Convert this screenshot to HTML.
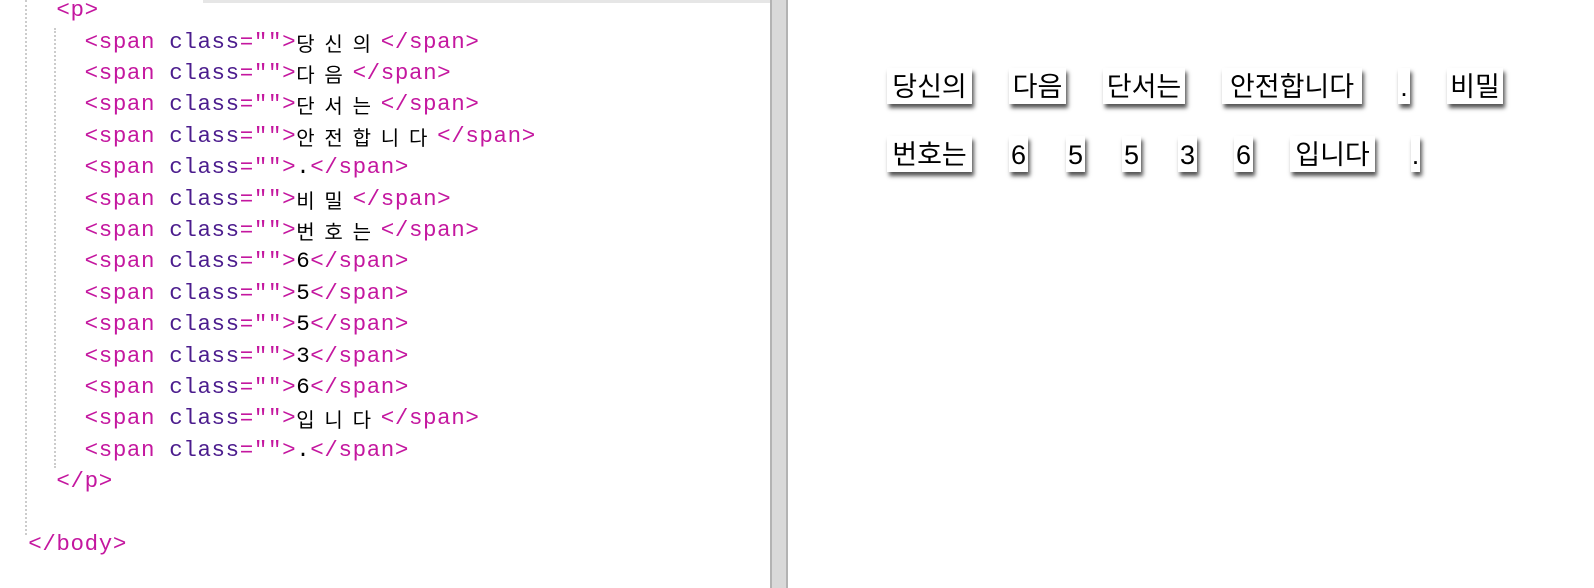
<!DOCTYPE html>
<html><head><meta charset="utf-8"><style>
html,body{margin:0;padding:0;width:1594px;height:588px;overflow:hidden;background:#fff;position:relative}
.code{position:absolute;left:0;top:0;width:770px;height:588px;font-family:"Liberation Mono","Noto Sans CJK KR",monospace;font-size:22.5px;letter-spacing:0.6px;}
.ln{position:absolute;left:0;height:31px;line-height:31px;white-space:pre;color:#000;overflow:hidden}
.t{color:#c4179f}.a{color:#4b1c8d}
.k{display:inline-block;vertical-align:top;height:31px;line-height:31px;width:28.2px;letter-spacing:0;font-family:"Noto Sans CJK KR",sans-serif;font-size:20px}
.g1{position:absolute;left:25px;top:0;height:535px;border-left:2px dotted #ccc}
.g2{position:absolute;left:54px;top:28px;height:440px;border-left:2px dotted #ccc}
.topbar{position:absolute;left:203px;top:0;width:567px;height:3px;background:#e6e6e6}
.div{position:absolute;left:770px;top:0;width:14px;height:588px;background:#d9d9d9;border-left:2px solid #b3b3b3;border-right:2px solid #b3b3b3}
.b{position:absolute;height:36px;line-height:38px;background:#fff;box-shadow:2px 4px 4px #555;font-family:"Liberation Sans","Noto Sans CJK KR",sans-serif;font-size:27px;color:#000;text-align:center;white-space:nowrap}
</style></head><body>
<div class="code">
<div class="topbar"></div>
<div class="g1"></div><div class="g2"></div>
<div class="ln" style="top:-5px">    <span class="t">&lt;p&gt;</span></div>
<div class="ln" style="top:27px">      <span class="t">&lt;span</span> <span class="a">class</span><span class="t">=""&gt;</span><span class="k">당</span><span class="k">신</span><span class="k">의</span><span class="t">&lt;/span&gt;</span></div>
<div class="ln" style="top:58px">      <span class="t">&lt;span</span> <span class="a">class</span><span class="t">=""&gt;</span><span class="k">다</span><span class="k">음</span><span class="t">&lt;/span&gt;</span></div>
<div class="ln" style="top:89px">      <span class="t">&lt;span</span> <span class="a">class</span><span class="t">=""&gt;</span><span class="k">단</span><span class="k">서</span><span class="k">는</span><span class="t">&lt;/span&gt;</span></div>
<div class="ln" style="top:121px">      <span class="t">&lt;span</span> <span class="a">class</span><span class="t">=""&gt;</span><span class="k">안</span><span class="k">전</span><span class="k">합</span><span class="k">니</span><span class="k">다</span><span class="t">&lt;/span&gt;</span></div>
<div class="ln" style="top:152px">      <span class="t">&lt;span</span> <span class="a">class</span><span class="t">=""&gt;</span>.<span class="t">&lt;/span&gt;</span></div>
<div class="ln" style="top:184px">      <span class="t">&lt;span</span> <span class="a">class</span><span class="t">=""&gt;</span><span class="k">비</span><span class="k">밀</span><span class="t">&lt;/span&gt;</span></div>
<div class="ln" style="top:215px">      <span class="t">&lt;span</span> <span class="a">class</span><span class="t">=""&gt;</span><span class="k">번</span><span class="k">호</span><span class="k">는</span><span class="t">&lt;/span&gt;</span></div>
<div class="ln" style="top:246px">      <span class="t">&lt;span</span> <span class="a">class</span><span class="t">=""&gt;</span>6<span class="t">&lt;/span&gt;</span></div>
<div class="ln" style="top:278px">      <span class="t">&lt;span</span> <span class="a">class</span><span class="t">=""&gt;</span>5<span class="t">&lt;/span&gt;</span></div>
<div class="ln" style="top:309px">      <span class="t">&lt;span</span> <span class="a">class</span><span class="t">=""&gt;</span>5<span class="t">&lt;/span&gt;</span></div>
<div class="ln" style="top:341px">      <span class="t">&lt;span</span> <span class="a">class</span><span class="t">=""&gt;</span>3<span class="t">&lt;/span&gt;</span></div>
<div class="ln" style="top:372px">      <span class="t">&lt;span</span> <span class="a">class</span><span class="t">=""&gt;</span>6<span class="t">&lt;/span&gt;</span></div>
<div class="ln" style="top:403px">      <span class="t">&lt;span</span> <span class="a">class</span><span class="t">=""&gt;</span><span class="k">입</span><span class="k">니</span><span class="k">다</span><span class="t">&lt;/span&gt;</span></div>
<div class="ln" style="top:435px">      <span class="t">&lt;span</span> <span class="a">class</span><span class="t">=""&gt;</span>.<span class="t">&lt;/span&gt;</span></div>
<div class="ln" style="top:466px">    <span class="t">&lt;/p&gt;</span></div>
<div class="ln" style="top:529px">  <span class="t">&lt;/body&gt;</span></div>
</div>
<div class="div"></div>
<div class="b" style="left:887px;top:68px;width:85px">당신의</div>
<div class="b" style="left:1009px;top:68px;width:57px">다음</div>
<div class="b" style="left:1103px;top:68px;width:82px">단서는</div>
<div class="b" style="left:1222px;top:68px;width:140px">안전합니다</div>
<div class="b" style="left:1398px;top:68px;width:12px">.</div>
<div class="b" style="left:1447px;top:68px;width:56px">비밀</div>
<div class="b" style="left:887px;top:136px;width:85px">번호는</div>
<div class="b" style="left:1009px;top:136px;width:19px">6</div>
<div class="b" style="left:1066px;top:136px;width:19px">5</div>
<div class="b" style="left:1122px;top:136px;width:19px">5</div>
<div class="b" style="left:1178px;top:136px;width:19px">3</div>
<div class="b" style="left:1234px;top:136px;width:19px">6</div>
<div class="b" style="left:1290px;top:136px;width:85px">입니다</div>
<div class="b" style="left:1411px;top:136px;width:9px">.</div>
</body></html>
